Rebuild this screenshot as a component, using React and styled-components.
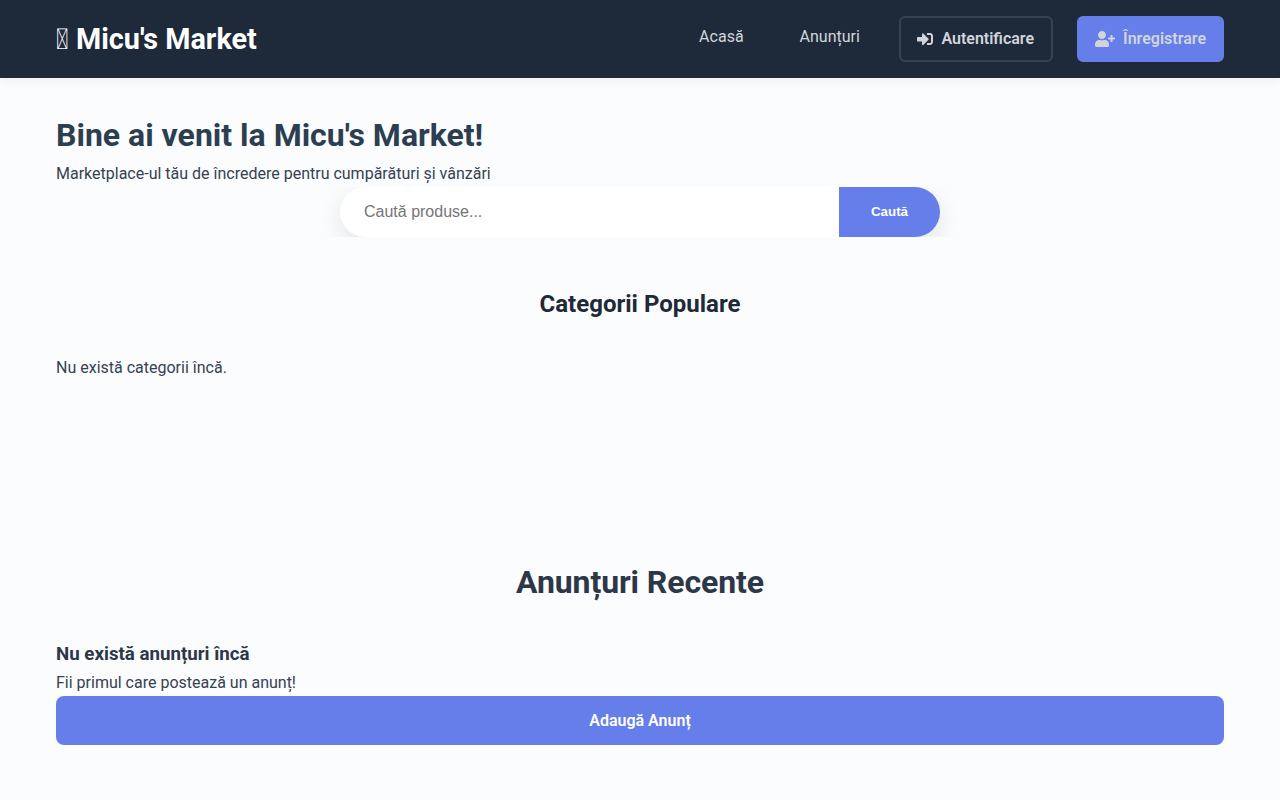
import React from "react"
import styled, { createGlobalStyle } from "styled-components"
import { FaSignInAlt, FaUserPlus } from "react-icons/fa"

const GlobalStyle = createGlobalStyle`
    * {
        box-sizing: border-box;
    }
    body {
        margin: 0;
        background: #fafcfe;
        color: #374151;
        font-family: Roboto, sans-serif;
        font-size: 16px;
        line-height: 1.2;
    }
`

const Header = styled.header`
    height: 78px;
    padding: 0 56px;
    background: #1e2a3a;
    box-shadow: 0 2px 10px rgba(0, 0, 0, 0.06);
    display: flex;
    align-items: center;
    justify-content: space-between;
`

const Logo = styled.a`
    color: #ffffff;
    font-size: 28.8px;
    font-weight: 700;
`

const Nav = styled.nav`
    display: flex;
    align-items: center;
`

const NavLink = styled.a`
    color: #d1d5db;
    font-size: 16px;
    font-weight: 400;
    margin-right: 56px;
    position: relative;
    top: -2px;
    &:nth-child(2) {
        margin-right: 39.5px;
    }
`

const NavButton = styled.a`
    height: 46px;
    display: flex;
    align-items: center;
    gap: 8px;
    padding: ${p => (p.$primary ? "0 16px" : "0 17px 0 16px")};
    border-radius: 6px;
    font-size: 16px;
    font-weight: 600;
    border: 2px solid ${p => (p.$primary ? "#667eea" : "#374151")};
    background: ${p => (p.$primary ? "#667eea" : "transparent")};
    color: #d1d5db;
    margin-left: ${p => (p.$primary ? "24px" : "0")};
`

const Main = styled.main`
    padding: 38px 56px 0;
`

const Title = styled.h1`
    margin: 0 0 10px;
    font-size: 32px;
    font-weight: 700;
    line-height: 38px;
    color: #2c3e50;
`

const Lead = styled.p`
    margin: 0;
    line-height: 19px;
`

const SearchClip = styled.div`
    width: 640px;
    margin: 4px auto 0;
    padding: 0 20px;
    overflow: hidden;
`

const SearchForm = styled.form`
    display: flex;
    height: 50px;
    border-radius: 25px;
    overflow: hidden;
    background: #ffffff;
    box-shadow: 0 8px 25px rgba(0, 0, 0, 0.1);
`

const SearchInput = styled.input`
    flex: 1;
    min-width: 0;
    border: none;
    outline: none;
    background: transparent;
    padding: 0 24px;
    font-family: "Liberation Sans", Arial, sans-serif;
    font-size: 16px;
    &::placeholder {
        color: #757575;
    }
`

const SearchButton = styled.button`
    width: 101px;
    border: none;
    padding: 0 0 2px;
    background: #667eea;
    color: #ffffff;
    font-family: "Liberation Sans", Arial, sans-serif;
    font-size: 13.33px;
    font-weight: 700;
`

const CategoriesTitle = styled.h2`
    margin: 53px 0 0;
    text-align: center;
    font-size: 24px;
    font-weight: 700;
    line-height: 29px;
    color: #1f2937;
`

const Empty = styled.p`
    margin: 39px 0 0;
    line-height: 19px;
`

const RecentTitle = styled.h2`
    margin: 186px 0 0;
    text-align: center;
    font-size: 32px;
    font-weight: 700;
    line-height: 38px;
    letter-spacing: -0.1px;
    color: #2d3748;
`

const EmptyTitle = styled.h3`
    margin: 42px 0 8px;
    font-size: 18.72px;
    font-weight: 700;
    line-height: 22px;
    color: #2d3748;
`

const AddButton = styled.a`
    height: 49px;
    margin-top: 4px;
    border-radius: 8px;
    background: #667eea;
    color: #ffffff;
    font-weight: 600;
    display: flex;
    align-items: center;
    justify-content: center;
`

const App = () => {
    return (
        <>
            <GlobalStyle />
            <Header>
                <Logo>{"\uE000"} Micu's Market</Logo>
                <Nav>
                    <NavLink>Acasă</NavLink>
                    <NavLink>Anunțuri</NavLink>
                    <NavButton><FaSignInAlt size={16} /> Autentificare</NavButton>
                    <NavButton $primary><FaUserPlus size={20} /> Înregistrare</NavButton>
                </Nav>
            </Header>
            <Main>
                <Title>Bine ai venit la Micu's Market!</Title>
                <Lead>Marketplace-ul tău de încredere pentru cumpărături și vânzări</Lead>
                <SearchClip>
                    <SearchForm onSubmit={e => e.preventDefault()}>
                        <SearchInput placeholder="Caută produse..." />
                        <SearchButton>Caută</SearchButton>
                    </SearchForm>
                </SearchClip>
                <CategoriesTitle>Categorii Populare</CategoriesTitle>
                <Empty>Nu există categorii încă.</Empty>
                <RecentTitle>Anunțuri Recente</RecentTitle>
                <EmptyTitle>Nu există anunțuri încă</EmptyTitle>
                <Lead>Fii primul care postează un anunț!</Lead>
                <AddButton>Adaugă Anunț</AddButton>
            </Main>
        </>
    )
}

export default App
